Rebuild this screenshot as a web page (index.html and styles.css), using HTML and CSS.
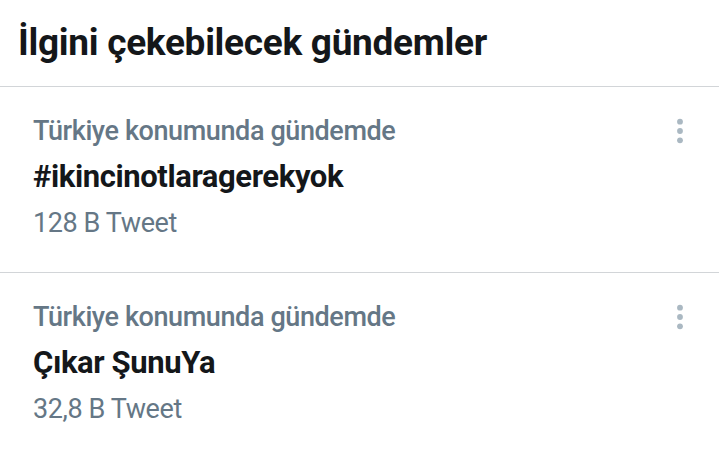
FILE: index.html
```html
<!DOCTYPE html>
<html lang="tr">
<head>
<meta charset="utf-8">
<link rel="stylesheet" href="styles.css">
</head>
<body>
<div class="panel">
  <h2 class="head">İlgini çekebilecek gündemler</h2>
  <div class="trend">
    <div class="info">
      <div class="meta">Türkiye konumunda gündemde</div>
      <div class="name">#ikincinotlaragerekyok</div>
      <div class="count">128 B Tweet</div>
    </div>
    <svg class="more" width="8" height="26" viewBox="0 0 8 26"><circle cx="4" cy="3.7" r="2.9"/><circle cx="4" cy="13" r="2.9"/><circle cx="4" cy="22.3" r="2.9"/></svg>
  </div>
  <div class="trend">
    <div class="info">
      <div class="meta">Türkiye konumunda gündemde</div>
      <div class="name">Çıkar ŞunuYa</div>
      <div class="count">32,8 B Tweet</div>
    </div>
    <svg class="more" width="8" height="26" viewBox="0 0 8 26"><circle cx="4" cy="3.7" r="2.9"/><circle cx="4" cy="13" r="2.9"/><circle cx="4" cy="22.3" r="2.9"/></svg>
  </div>
</div>
</body>
</html>
```
FILE: styles.css
```css
html, body { margin: 0; padding: 0; background: #fff; }
body { font-family: Roboto, "Noto Sans", sans-serif; width: 719px; height: 457px; overflow: hidden; }
.panel { display: flex; flex-direction: column; }
.head {
  margin: 0;
  padding: 21px 18px 0 18px;
  box-sizing: border-box;
  height: 87px;
  font-size: 37px;
  font-weight: 700;
  line-height: 44px;
  color: #14171a;
  border-bottom: 1px solid #d2d5d8;
  letter-spacing: -0.3px;
}
.trend {
  display: flex;
  justify-content: space-between;
  align-items: flex-start;
  padding: 28px 35px 0 33px;
  height: 186px;
  box-sizing: border-box;
  border-bottom: 1px solid #d2d5d8;
}
.trend:last-child { border-bottom: none; }
.info { display: flex; flex-direction: column; }
.meta { font-size: 27px; font-weight: 500; color: #657786; line-height: 32px; letter-spacing: -0.4px; }
.name { font-size: 31px; font-weight: 700; color: #14171a; line-height: 38px; margin-top: 11px; letter-spacing: -0.4px; }
.count { font-size: 27px; font-weight: 400; color: #657786; line-height: 32px; margin-top: 11px; letter-spacing: -0.4px; }
.more { fill: #aab8c2; margin-top: 3px; }
```
